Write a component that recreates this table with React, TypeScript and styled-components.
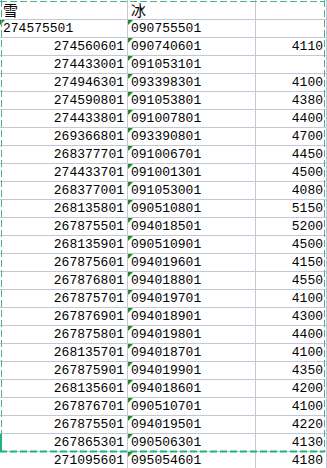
import styled, { createGlobalStyle } from "styled-components";

const rows: [string, string, string][] = [
    ["274575501", "090755501", ""],
    ["274560601", "090740601", "4110"],
    ["274433001", "091053101", ""],
    ["274946301", "093398301", "4100"],
    ["274590801", "091053801", "4380"],
    ["274433801", "091007801", "4400"],
    ["269366801", "093390801", "4700"],
    ["268377701", "091006701", "4450"],
    ["274433701", "091001301", "4500"],
    ["268377001", "091053001", "4080"],
    ["268135801", "090510801", "5150"],
    ["267875501", "094018501", "5200"],
    ["268135901", "090510901", "4500"],
    ["267875601", "094019601", "4150"],
    ["267876801", "094018801", "4550"],
    ["267875701", "094019701", "4100"],
    ["267876901", "094018901", "4300"],
    ["267875801", "094019801", "4400"],
    ["268135701", "094018701", "4100"],
    ["267875901", "094019901", "4350"],
    ["268135601", "094018601", "4200"],
    ["267876701", "090510701", "4100"],
    ["267875501", "094019501", "4220"],
    ["267865301", "090506301", "4130"],
    ["271095601", "095054601", "4180"],
];

const GlobalStyle = createGlobalStyle`
    html, body {
        margin: 0;
        padding: 0;
        background: #ffffff;
    }
`;

const Sheet = styled.div`
    position: relative;
    width: 327px;
    height: 468px;
    overflow: hidden;
    display: grid;
    grid-template-columns: 128px 128px 1fr;
    grid-template-rows: 20px;
    grid-auto-rows: 18px;
    font-family: "Liberation Mono", "DejaVu Sans Mono", "Noto Sans CJK SC", monospace;
    font-size: 13px;
    color: #000;
`;

const Row = styled.div`
    display: contents;
`;

const Cell = styled.div<{ $align?: "left" | "right" }>`
    position: relative;
    box-sizing: border-box;
    border-right: 1px solid #c4c8d6;
    border-bottom: 1px solid #c4c8d6;
    display: flex;
    align-items: flex-end;
    justify-content: ${(p) => (p.$align === "right" ? "flex-end" : "flex-start")};
    padding: 0 3px;
    line-height: 16px;
    white-space: nowrap;
`;

const HeadText = styled.span`
    font-family: "Noto Sans CJK SC", sans-serif;
    font-size: 15px;
    line-height: 19px;
`;

const TextFlag = styled.span`
    position: absolute;
    left: 0;
    top: 0;
    width: 5px;
    height: 5px;
    background: #1f8a1f;
    clip-path: polygon(0 0, 100% 0, 0 100%);
`;

// copy-range marquee drawn over the cells
const Marquee = styled.svg`
    position: absolute;
    left: 0;
    top: 0;
    pointer-events: none;
`;

export default function App() {
    return (
        <>
            <GlobalStyle />
            <Sheet>
                <Row>
                    <Cell><HeadText>雪</HeadText></Cell>
                    <Cell><HeadText>冰</HeadText></Cell>
                    <Cell />
                </Row>
                {rows.map(([a, b, c], i) => (
                    <Row key={i}>
                        <Cell $align={i === 0 ? "left" : "right"}>
                            {i === 0 && <TextFlag />}
                            {a}
                        </Cell>
                        <Cell>
                            <TextFlag />
                            {b}
                        </Cell>
                        <Cell $align="right">{c}</Cell>
                    </Row>
                ))}
                <Marquee width="327" height="468">
                    <line x1="0" y1="1.5" x2="325" y2="1.5" stroke="#4fae90" strokeWidth="1" strokeDasharray="7 3" />
                    <line x1="1.5" y1="0" x2="1.5" y2="434" stroke="#4fae90" strokeWidth="1" strokeDasharray="7 3" />
                    <line x1="324.5" y1="0" x2="324.5" y2="452" stroke="#4fae90" strokeWidth="1" strokeDasharray="7 3" />
                    <rect x="0" y="434" width="2" height="18" fill="#21b27a" />
                    <line x1="0" y1="451.5" x2="325" y2="451.5" stroke="#21b27a" strokeWidth="2" strokeDasharray="7 3" />
                </Marquee>
            </Sheet>
        </>
    );
}
